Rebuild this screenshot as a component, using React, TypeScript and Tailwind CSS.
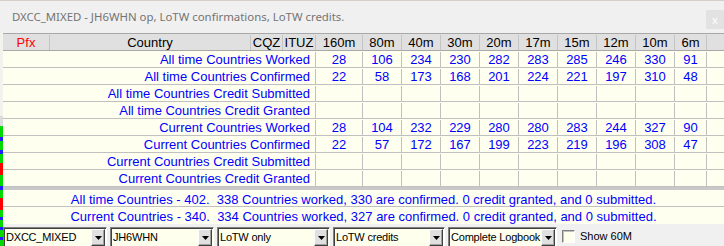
import React from "react";

type Row = { label: string; values: (number | null)[] };

const bands = ["160m", "80m", "40m", "30m", "20m", "17m", "15m", "12m", "10m", "6m"];
const bandWidths = ["w-[47px]", "w-[39px]", "w-[39px]", "w-[39px]", "w-[39px]", "w-[39px]", "w-[39px]", "w-[39px]", "w-[39px]", "w-[32px]"];

const empty = [null, null, null, null, null, null, null, null, null, null];

const rows: Row[] = [
  { label: "All time Countries Worked", values: [28, 106, 234, 230, 282, 283, 285, 246, 330, 91] },
  { label: "All time Countries Confirmed", values: [22, 58, 173, 168, 201, 224, 221, 197, 310, 48] },
  { label: "All time Countries Credit Submitted", values: empty },
  { label: "All time Countries Credit Granted", values: empty },
  { label: "Current Countries Worked", values: [28, 104, 232, 229, 280, 280, 283, 244, 327, 90] },
  { label: "Current Countries Confirmed", values: [22, 57, 172, 167, 199, 223, 219, 196, 308, 47] },
  { label: "Current Countries Credit Submitted", values: empty },
  { label: "Current Countries Credit Granted", values: empty },
];

// bits of the window that sits behind this one, visible down the left edge
const strip: [string, string][] = [
  ["h-[83px]", "bg-[#f3f3ee]"],
  ["h-[10px]", "bg-[#dcdcdc]"],
  ["h-[11px]", "bg-[#00d800]"],
  ["h-[4px]", "bg-[#2020ff]"],
  ["h-[9px]", "bg-[#00d800]"],
  ["h-[4px]", "bg-[#2020ff]"],
  ["h-[9px]", "bg-[#00d800]"],
  ["h-[12px]", "bg-[#ff0000]"],
  ["h-[11px]", "bg-[#00d800]"],
  ["h-[4px]", "bg-[#2020ff]"],
  ["h-[8px]", "bg-[#00d800]"],
  ["h-[12px]", "bg-[#ff0000]"],
  ["h-[7px]", "bg-[#00d800]"],
  ["h-[3px]", "bg-[#2020ff]"],
  ["h-[7px]", "bg-[#00d800]"],
  ["h-[3px]", "bg-[#2020ff]"],
  ["h-[7px]", "bg-[#00d800]"],
  ["h-[3px]", "bg-[#2020ff]"],
  ["h-[10px]", "bg-[#00d800]"],
];

function Combo({ text, width }: { text: string; width: string }) {
  return (
    <div
      className={`flex h-[21px] ${width} shrink-0 items-stretch border border-t-[#808080] border-l-[#808080] border-r-white border-b-white bg-[#ffffee] shadow-[inset_1px_1px_0_#404040]`}
    >
      <span className="flex-1 overflow-hidden whitespace-nowrap pl-[2px] pt-[3px] text-[11px] leading-[13px] tracking-[-0.2px] text-black">
        {text}
      </span>
      <div className="mt-[1px] mr-[1px] flex h-[17px] w-[14px] shrink-0 items-center justify-center border border-t-white border-l-white border-r-[#404040] border-b-[#404040] bg-[#e0e0e0] shadow-[inset_-1px_-1px_0_#a0a0a0]">
        <svg width="7" height="4" viewBox="0 0 7 4">
          <polygon points="0,0 7,0 3.5,4" fill="#000" />
        </svg>
      </div>
    </div>
  );
}

export default function App() {
  return (
    <div className="h-[246px] w-[724px] overflow-hidden bg-[#f0f0f0] font-['Liberation_Sans',Arial,sans-serif]">
      <div className="relative h-[33px] border-t border-[#d6cfc8] bg-[#f0f0f0]">
        <p className="pl-[12px] pt-[7px] font-['Noto_Sans',sans-serif] text-[11.4px] leading-[17px] text-[#747474]">
          DXCC_MIXED - JH6WHN op, LoTW confirmations, LoTW credits.
        </p>
        <div className="absolute right-0 top-[9px] flex h-[19px] w-[18px] items-center justify-center bg-[#e2e2e2] font-['Noto_Sans',sans-serif] text-[11px] leading-none text-white">
          x
        </div>
      </div>

      <div className="flex">
        <div className="flex w-[3px] shrink-0 flex-col">
          {strip.map(([h, bg], i) => (
            <div key={i} className={`${h} ${bg}`} />
          ))}
        </div>

        <div className="flex flex-1 flex-col">
          <div className="flex h-[18px] border-y border-[#a8a8a8] bg-[#e0e0e0] pt-[1px] text-[13px] leading-[16px] text-black">
            <div className="w-[47px] border-r border-[#c4c4c4] text-center text-[#ff0000]">Pfx</div>
            <div className="w-[201px] border-r border-[#c4c4c4] text-center">Country</div>
            <div className="w-[32px] border-r border-[#c4c4c4] text-center">CQZ</div>
            <div className="w-[33px] border-r border-[#c4c4c4] text-center">ITUZ</div>
            {bands.map((b, i) => (
              <div key={b} className={`${bandWidths[i]} border-r border-[#c4c4c4] text-center`}>
                {b}
              </div>
            ))}
            <div className="flex-1" />
          </div>

          <div className="bg-[#fffff0] text-[13px] leading-[16px] text-[#0000ff]">
            {rows.map((r) => (
              <div key={r.label} className="flex h-[17px] border-b border-[#c0c0c0] pt-[1px]">
                <div className="w-[313px] border-r border-[#c0c0c0] pr-[5px] text-right">{r.label}</div>
                {r.values.map((v, i) => (
                  <div key={i} className={`${bandWidths[i]} border-r border-[#c0c0c0] text-center`}>
                    {v ?? ""}
                  </div>
                ))}
                <div className="flex-1" />
              </div>
            ))}
            <div className="h-[3px] bg-[#c8c8c8]" />
            <div className="h-[17px] whitespace-pre border-b border-[#c0c0c0] pt-[2px] text-center">
              All time Countries - 402.  338 Countries worked, 330 are confirmed. 0 credit granted, and 0 submitted.
            </div>
            <div className="h-[17px] whitespace-pre pt-[2px] text-center">
              Current Countries - 340.  334 Countries worked, 327 are confirmed. 0 credit granted, and 0 submitted.
            </div>
          </div>

          <div className="flex items-start gap-[3px] pt-[3px]">
            <Combo text="DXCC_MIXED" width="w-[104px]" />
            <Combo text="JH6WHN" width="w-[104px]" />
            <Combo text="LoTW only" width="w-[113px]" />
            <Combo text="LoTW credits" width="w-[112px]" />
            <Combo text="Complete Logbook" width="w-[109px]" />
            <div className="ml-[2px] mt-[3px] h-[13px] w-[13px] border border-t-[#808080] border-l-[#808080] border-r-white border-b-white bg-[#ffffee] shadow-[inset_1px_1px_0_#c0c0c0]" />
            <span className="ml-[2px] mt-[2px] text-[11px] leading-[14px] text-black">Show 60M</span>
          </div>
        </div>
      </div>
    </div>
  );
}
